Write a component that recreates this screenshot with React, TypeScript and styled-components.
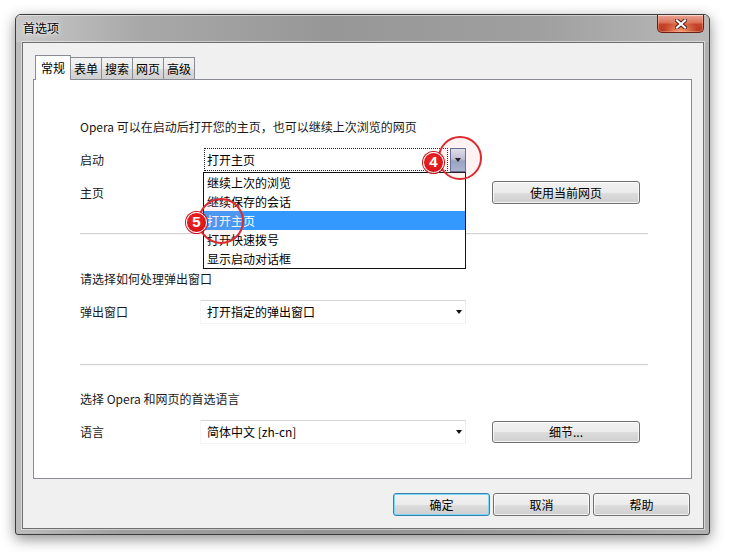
import React from "react";
import styled, { createGlobalStyle } from "styled-components";

const Global = createGlobalStyle`
  html, body { margin: 0; padding: 0; background: #ffffff; }
  body {
    font-family: "Noto Sans CJK SC", "Microsoft YaHei", sans-serif;
    font-size: 12px;
    color: #000;
  }
  * { box-sizing: border-box; }
`;

const Page = styled.div`
  position: relative;
  width: 730px;
  height: 552px;
  padding: 14px 0 0 15px;
  overflow: hidden;
`;

const Win = styled.div`
  width: 695px;
  height: 521px;
  display: flex;
  flex-direction: column;
  border: 1px solid #3c3c3c;
  border-radius: 6px 6px 3px 3px;
  overflow: hidden;
  background-color: #a6a6a6;
  background-image: linear-gradient(to right, #bdbdbd 0%, #a0a0a0 15%, #949494 45%, #9c9c9c 75%, #b2b2b2 100%);
  box-shadow: 0 4px 14px rgba(0, 0, 0, 0.45);
  padding: 0 5px 5px 6px;
`;

const TitleBar = styled.div`
  height: 27px;
  margin: 0 -5px 0 -6px;
  padding: 0 5px 0 6px;
  display: flex;
  justify-content: space-between;
  align-items: flex-start;
  background-image: linear-gradient(to right, #c8c8c8 0%, #a8a8a8 18%, #979797 45%, #9f9f9f 75%, #b9b9b9 100%);
  box-shadow: inset 0 1px 0 rgba(255, 255, 255, 0.45);
`;

const TitleText = styled.div`
  margin: 5px 0 0 1px;
  line-height: 16px;
  font-size: 12px;
  color: #000;
  text-shadow: 0 0 6px rgba(255, 255, 255, 0.9), 0 0 3px rgba(255, 255, 255, 0.9);
`;

const CloseBtn = styled.div`
  width: 47px;
  height: 19px;
  margin-top: -1px;
  border: 1px solid #6a1f14;
  border-top-color: #7a2a1c;
  border-radius: 0 0 5px 5px;
  background: radial-gradient(ellipse at 50% 100%, rgba(255, 170, 120, 0.9) 0%, rgba(255, 150, 100, 0) 55%),
    linear-gradient(#e9a493 0%, #db7258 45%, #c6432a 55%, #b73820 100%);
  box-shadow: inset 0 1px 0 rgba(255, 255, 255, 0.45), inset 0 0 0 1px rgba(255, 200, 180, 0.35);
  display: flex;
  align-items: center;
  justify-content: center;
`;

const Client = styled.div`
  flex: 1;
  background: #f0f0f0;
  border: 1px solid #6f6f6f;
  box-shadow: 0 0 0 1px rgba(255, 255, 255, 0.45);
  padding: 12px 11px 0 10px;
  display: flex;
  flex-direction: column;
`;

const TabStrip = styled.div`
  height: 25px;
  display: flex;
  align-items: flex-end;
  padding-left: 2px;
  margin-bottom: -1px;
  position: relative;
  z-index: 1;
`;

const Tab = styled.div<{ $active?: boolean }>`
  display: flex;
  align-items: center;
  justify-content: center;
  font-size: 12px;
  line-height: 16px;
  color: #000;
  border: 1px solid #898c95;
  border-bottom: none;
  ${(p) =>
    p.$active
      ? `
    height: 25px;
    padding: 0 5px;
    background: #ffffff;
  `
      : `
    height: 22px;
    margin-bottom: 1px;
    padding: 0 3px;
    border-left: none;
    background: linear-gradient(#f3f3f3 0%, #ebebeb 50%, #dddddd 51%, #cfcfcf 100%);
  `}
`;

const Panel = styled.div`
  height: 400px;
  background: #ffffff;
  border: 1px solid #898c95;
  padding: 37px 0 0 46px;
  display: flex;
  flex-direction: column;
`;

const Heading = styled.div<{ $mt: number }>`
  margin-top: ${(p) => p.$mt}px;
  line-height: 20px;
  height: 20px;
  color: #1a1a1a;
  white-space: nowrap;
`;

const Row = styled.div<{ $mt: number; $h: number }>`
  margin-top: ${(p) => p.$mt}px;
  height: ${(p) => p.$h}px;
  display: flex;
  align-items: center;
`;

const Label = styled.div`
  width: 120px;
  color: #1a1a1a;
  line-height: 16px;
`;

const SelectBox = styled.div<{ $focused?: boolean }>`
  position: relative;
  width: 266px;
  height: 100%;
  display: flex;
  align-items: center;
  background: #ffffff;
  ${(p) =>
    p.$focused
      ? `border: none;`
      : `
    border-top: 1px solid #d6d6d6;
    border-right: 1px solid #ededed;
    border-bottom: 1px solid #f4f4f4;
    border-left: 1px solid #f6f6f6;
    padding-left: 6px;
  `}
`;

const SelectText = styled.div`
  flex: 1;
  line-height: 16px;
  white-space: nowrap;
`;

const FocusRect = styled.div`
  flex: 1;
  height: 100%;
  margin-left: 4px;
  border: 1px dotted #222;
  padding-left: 2px;
  display: flex;
  align-items: center;
  line-height: 16px;
`;

const ArrowTri = styled.span`
  width: 0;
  height: 0;
  border-left: 3.5px solid transparent;
  border-right: 3.5px solid transparent;
  border-top: 4px solid #111;
`;

const PlainArrow = styled(ArrowTri)`
  margin-right: 3px;
`;

const ArrowButton = styled.div`
  width: 16px;
  height: calc(100% + 1px);
  align-self: flex-start;
  margin-left: 2px;
  border: 1px solid #4f6a92;
  background: linear-gradient(#dfe8f5 0%, #b4c6de 45%, #8ba6c9 55%, #9fb9da 100%);
  display: flex;
  align-items: center;
  justify-content: center;
`;

const DropList = styled.div`
  position: absolute;
  top: calc(100% + 1px);
  left: 3px;
  width: 263px;
  background: #ffffff;
  border: 1px solid #111;
  z-index: 5;
`;

const DropItem = styled.div<{ $selected?: boolean }>`
  height: 19px;
  line-height: 19px;
  padding-left: 3px;
  white-space: nowrap;
  background: ${(p) => (p.$selected ? "#3399ff" : "#ffffff")};
  color: ${(p) => (p.$selected ? "#ffffff" : "#000000")};
`;

const EmptySlot = styled.div`
  width: 266px;
  height: 100%;
`;

const Button = styled.div<{ $w: number; $h: number; $default?: boolean; $ml?: number }>`
  width: ${(p) => p.$w}px;
  height: ${(p) => p.$h}px;
  margin-left: ${(p) => p.$ml ?? 0}px;
  border: 1px solid ${(p) => (p.$default ? "#3c7fb1" : "#707070")};
  border-radius: 3px;
  background: linear-gradient(#f2f2f2 0%, #ebebeb 50%, #dddddd 51%, #cfcfcf 100%);
  box-shadow: inset 0 0 0 1px ${(p) => (p.$default ? "rgba(110, 215, 250, 0.9)" : "rgba(255, 255, 255, 0.75)")};
  display: flex;
  align-items: center;
  justify-content: center;
  line-height: 16px;
  color: #000;
  white-space: nowrap;
`;

const Separator = styled.div<{ $mt: number }>`
  margin-top: ${(p) => p.$mt}px;
  width: 568px;
  height: 1px;
  background: #d2d2d2;
  box-shadow: 0 1px 0 #f7f7f7;
`;

const ButtonRow = styled.div`
  margin-top: 14px;
  display: flex;
  justify-content: flex-end;
  gap: 3px;
  padding-right: 2px;
`;

const Ring = styled.div<{ $x: number; $y: number; $d: number }>`
  position: absolute;
  left: ${(p) => p.$x}px;
  top: ${(p) => p.$y}px;
  width: ${(p) => p.$d}px;
  height: ${(p) => p.$d}px;
  border-radius: 50%;
  border: 2px solid #dc2a30;
  background: rgba(255, 150, 150, 0.12);
  z-index: 10;
  pointer-events: none;
`;

const Badge = styled.div<{ $x: number; $y: number }>`
  position: absolute;
  left: ${(p) => p.$x}px;
  top: ${(p) => p.$y}px;
  width: 21px;
  height: 21px;
  border-radius: 50%;
  background: radial-gradient(circle at 45% 40%, #f02a22 0%, #d7141b 70%, #c10f16 100%);
  border: 1.5px solid #ffffff;
  box-shadow: 0 0 0 1px #c8141a;
  color: #ffffff;
  font-family: "Liberation Sans", Arial, sans-serif;
  font-weight: bold;
  font-size: 15px;
  line-height: 18px;
  text-align: center;
  z-index: 11;
`;

const CloseIcon = () => (
  <svg width="12" height="10" viewBox="0 0 12 10">
    <path d="M2 1.5 L10 8.5 M10 1.5 L2 8.5" stroke="#4a1a12" strokeWidth="4" strokeLinecap="square" />
    <path d="M2 1.5 L10 8.5 M10 1.5 L2 8.5" stroke="#ffffff" strokeWidth="2.2" strokeLinecap="square" />
  </svg>
);

const startupItems = ["继续上次的浏览", "继续保存的会话", "打开主页", "打开快速拨号", "显示启动对话框"];

export default function App() {
  return (
    <Page>
      <Global />
      <Win>
        <TitleBar>
          <TitleText>首选项</TitleText>
          <CloseBtn>
            <CloseIcon />
          </CloseBtn>
        </TitleBar>
        <Client>
          <TabStrip>
            <Tab $active>常规</Tab>
            <Tab>表单</Tab>
            <Tab>搜索</Tab>
            <Tab>网页</Tab>
            <Tab>高级</Tab>
          </TabStrip>
          <Panel>
            <Heading $mt={0}>Opera 可以在启动后打开您的主页，也可以继续上次浏览的网页</Heading>
            <Row $mt={11} $h={23}>
              <Label>启动</Label>
              <SelectBox $focused>
                <FocusRect>打开主页</FocusRect>
                <ArrowButton>
                  <ArrowTri />
                </ArrowButton>
                <DropList>
                  {startupItems.map((t) => (
                    <DropItem key={t} $selected={t === "打开主页"}>
                      {t}
                    </DropItem>
                  ))}
                </DropList>
              </SelectBox>
            </Row>
            <Row $mt={10} $h={23}>
              <Label>主页</Label>
              <EmptySlot />
              <Button $w={148} $h={23} $ml={26}>
                使用当前网页
              </Button>
            </Row>
            <Separator $mt={29} />
            <Heading $mt={35}>请选择如何处理弹出窗口</Heading>
            <Row $mt={11} $h={24}>
              <Label>弹出窗口</Label>
              <SelectBox>
                <SelectText>打开指定的弹出窗口</SelectText>
                <PlainArrow />
              </SelectBox>
            </Row>
            <Separator $mt={40} />
            <Heading $mt={24}>选择 Opera 和网页的首选语言</Heading>
            <Row $mt={11} $h={24}>
              <Label>语言</Label>
              <SelectBox>
                <SelectText>简体中文 [zh-cn]</SelectText>
                <PlainArrow />
              </SelectBox>
              <Button $w={148} $h={22} $ml={26}>
                细节...
              </Button>
            </Row>
          </Panel>
          <ButtonRow>
            <Button $w={97} $h={23} $default>
              确定
            </Button>
            <Button $w={97} $h={23}>
              取消
            </Button>
            <Button $w={97} $h={23}>
              帮助
            </Button>
          </ButtonRow>
        </Client>
      </Win>
      <Ring $x={438} $y={136} $d={44} />
      <Badge $x={423} $y={152}>4</Badge>
      <Ring $x={198} $y={198} $d={46} />
      <Badge $x={186} $y={212}>5</Badge>
    </Page>
  );
}
